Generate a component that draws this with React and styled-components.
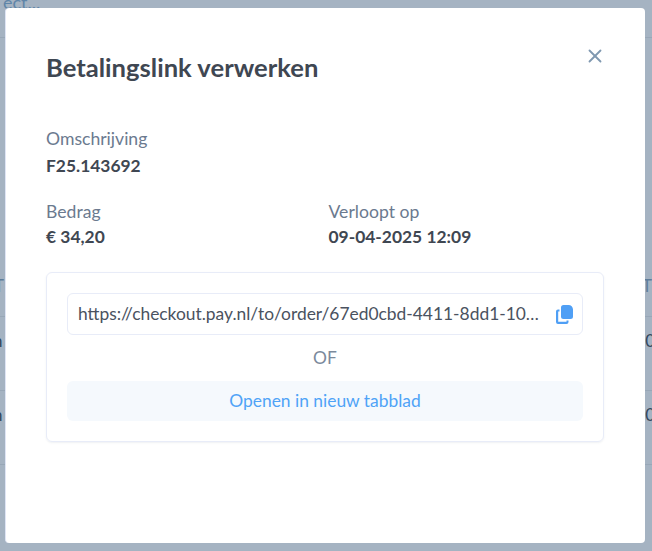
import React from 'react'
import styled, { createGlobalStyle } from 'styled-components'
import { X } from 'lucide-react'

const GlobalStyle = createGlobalStyle`
    html, body {
        margin: 0;
        padding: 0;
        height: 100%;
        overflow: hidden;
        background: #a5b3c2;
        font-family: Lato, "Noto Sans", sans-serif;
    }
`

const Page = styled.div`
    position: relative;
    width: 652px;
    height: 551px;
    overflow: hidden;
    background: #a5b3c2;
`

const TopCell = styled.div`
    height: 44px;
    padding-left: 3px;
    border-bottom: 1px solid #98a7b7;
    font-size: 18px;
    line-height: 18px;
    margin-top: -7px;
    color: #5f85a8;
`

const HeaderRow = styled.div`
    display: flex;
    justify-content: space-between;
    height: 40px;
    margin: 238px 0 0 -6px;
    border-bottom: 1px solid #98a7b7;
    font-size: 17px;
    line-height: 20px;
    color: #5f7d9a;
`

const TableRow = styled.div`
    display: flex;
    justify-content: space-between;
    box-sizing: border-box;
    height: 74px;
    margin: 0 -3px 0 -7px;
    padding-top: 14px;
    border-bottom: 1px solid #98a7b7;
    font-size: 17px;
    line-height: 20px;
    color: #33475c;
`

const Modal = styled.div`
    position: absolute;
    left: 5px;
    top: 8px;
    width: 640px;
    height: 535px;
    box-sizing: border-box;
    padding: 42px 41px 42px 40px;
    background: #fff;
    border-left: 1px solid #dfe5f5;
    border-radius: 4px;
`

const CloseButton = styled.button`
    position: absolute;
    top: 37px;
    right: 39px;
    width: 22px;
    height: 22px;
    padding: 0;
    display: flex;
    align-items: center;
    justify-content: center;
    border: 0;
    background: none;
    color: #7f98b0;
`

const Title = styled.h2`
    margin: 0 0 43px;
    font-size: 25.6px;
    line-height: 34px;
    font-weight: 700;
    color: #3f4752;
`

const Field = styled.div`
    display: flex;
    flex-direction: column;
    gap: ${props => props.gap}px;
`

const Details = styled.div`
    display: flex;
    flex-direction: column;
    gap: 22px;
`

const FieldRow = styled.div`
    display: grid;
    grid-template-columns: 282.5px 1fr;
`

const Label = styled.div`
    font-size: 17.6px;
    line-height: 24px;
    color: #6b7a8f;
`

const Value = styled.div`
    font-size: 17.4px;
    line-height: 24px;
    font-weight: 700;
    color: #3f4752;
`

const LinkCard = styled.div`
    box-sizing: border-box;
    width: 558px;
    margin-top: 23px;
    padding: 20px;
    border: 1px solid #e8ecf8;
    border-radius: 6px;
    box-shadow: 0 1px 2px rgba(100, 116, 139, 0.1);
    display: flex;
    flex-direction: column;
`

const UrlField = styled.div`
    box-sizing: border-box;
    height: 42px;
    padding: 0 9px 0 10px;
    display: flex;
    align-items: center;
    gap: 16px;
    border: 1px solid #e8ecf8;
    border-radius: 6px;
`

const UrlText = styled.span`
    flex: 1;
    min-width: 0;
    overflow: hidden;
    white-space: nowrap;
    text-overflow: ellipsis;
    padding-bottom: 2px;
    font-size: 17.4px;
    color: #4a5260;
`

const Separator = styled.div`
    height: 46px;
    display: flex;
    align-items: center;
    justify-content: center;
    padding-bottom: 2px;
    box-sizing: border-box;
    font-size: 17.4px;
    color: #7b8a9c;
`

const OpenButton = styled.button`
    height: 40px;
    padding: 0 0 2px;
    border: 0;
    border-radius: 6px;
    background: #f5f9fd;
    font-family: inherit;
    font-size: 17.4px;
    color: #4fa3f7;
`

const CopyIcon = () => (
    <svg width="17" height="19" viewBox="0 0 17 19" fill="#4f9ff5">
        <path d="M5 2.5A2.5 2.5 0 0 1 7.5 0H12.5C15 0 17 2 17 4.5V11.5A2.5 2.5 0 0 1 14.5 14H7.5A2.5 2.5 0 0 1 5 11.5Z" />
        <path d="M3.5 4.5V6.5H2.2V16.8H10.5V15.5H12.5V17A2 2 0 0 1 10.5 19H2A2 2 0 0 1 0 17V6.5A2 2 0 0 1 2 4.5Z" />
    </svg>
)

const App = () => (
    <Page>
        <GlobalStyle />
        <TopCell>ect...</TopCell>
        <HeaderRow>
            <span>T</span>
            <span>T</span>
        </HeaderRow>
        <TableRow>
            <span>n</span>
            <span>0</span>
        </TableRow>
        <TableRow>
            <span>n</span>
            <span>0</span>
        </TableRow>
        <Modal>
            <CloseButton aria-label="Sluiten">
                <X size={22} strokeWidth={2} />
            </CloseButton>
            <Title>Betalingslink verwerken</Title>
            <Details>
                <Field gap={3}>
                    <Label>Omschrijving</Label>
                    <Value>F25.143692</Value>
                </Field>
                <FieldRow>
                    <Field gap={1}>
                        <Label>Bedrag</Label>
                        <Value>€ 34,20</Value>
                    </Field>
                    <Field gap={1}>
                        <Label>Verloopt op</Label>
                        <Value>09-04-2025 12:09</Value>
                    </Field>
                </FieldRow>
            </Details>
            <LinkCard>
                <UrlField>
                    <UrlText>https://checkout.pay.nl/to/order/67ed0cbd-4411-8dd1-10e4-0a58a9feac02</UrlText>
                    <CopyIcon />
                </UrlField>
                <Separator>OF</Separator>
                <OpenButton>Openen in nieuw tabblad</OpenButton>
            </LinkCard>
        </Modal>
    </Page>
)

export default App
